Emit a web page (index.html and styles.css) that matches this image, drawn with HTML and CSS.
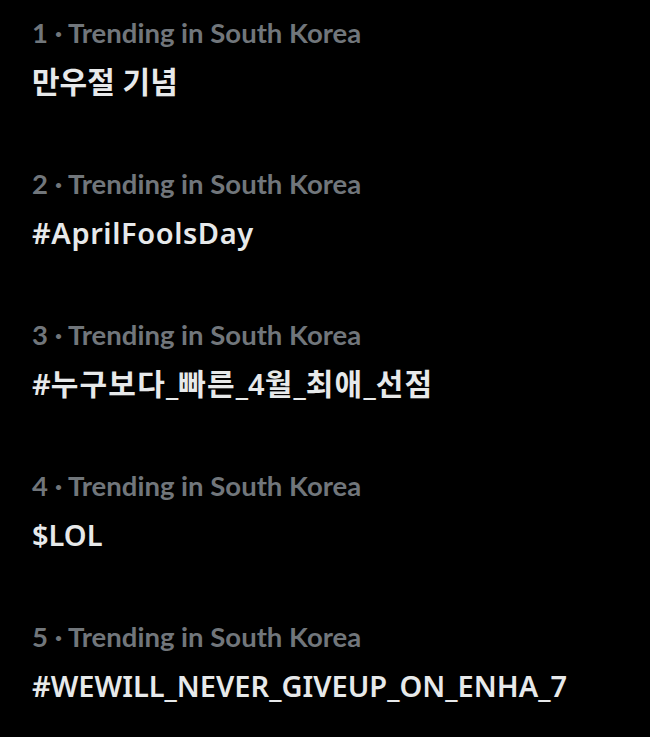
FILE: index.html
```html
<!DOCTYPE html>
<html lang="en">
<head>
<meta charset="utf-8">
<link rel="stylesheet" href="styles.css">
</head>
<body>
<ul class="trends">
  <li class="trend"><div class="meta">1 · Trending in South Korea</div><div class="title"><span class="ko tight">만우절 기념</span></div></li>
  <li class="trend"><div class="meta">2 · Trending in South Korea</div><div class="title wide">#AprilFoolsDay</div></li>
  <li class="trend"><div class="meta">3 · Trending in South Korea</div><div class="title">#<span class="ko">누구보다</span>_<span class="ko">빠른</span>_4<span class="ko">월</span>_<span class="ko">최애</span>_<span class="ko">선점</span></div></li>
  <li class="trend"><div class="meta">4 · Trending in South Korea</div><div class="title">$LOL</div></li>
  <li class="trend"><div class="meta">5 · Trending in South Korea</div><div class="title">#WEWILL_NEVER_GIVEUP_ON_ENHA_7</div></li>
</ul>
</body>
</html>
```
FILE: styles.css
```css
html, body {
  margin: 0;
  padding: 0;
  background: #000;
  width: 650px;
  height: 737px;
  overflow: hidden;
}
.trends {
  list-style: none;
  margin: 0;
  padding: 16px 0 0 32px;
  display: flex;
  flex-direction: column;
}
.trend {
  height: 151px;
  display: flex;
  flex-direction: column;
}
.meta {
  font-family: Lato, "Noto Sans", sans-serif;
  font-weight: 700;
  font-size: 27.5px;
  line-height: 34px;
  color: #71767b;
}
.title {
  font-family: "Noto Sans", "Noto Sans CJK KR", sans-serif;
  font-weight: 600;
  font-size: 29px;
  line-height: 40px;
  margin-top: 12px;
  color: #e7e9ea;
}
.title.wide {
  letter-spacing: 0.6px;
}
.ko {
  font-size: 30px;
  letter-spacing: 1.2px;
}
.ko.tight {
  letter-spacing: 0;
}
```
